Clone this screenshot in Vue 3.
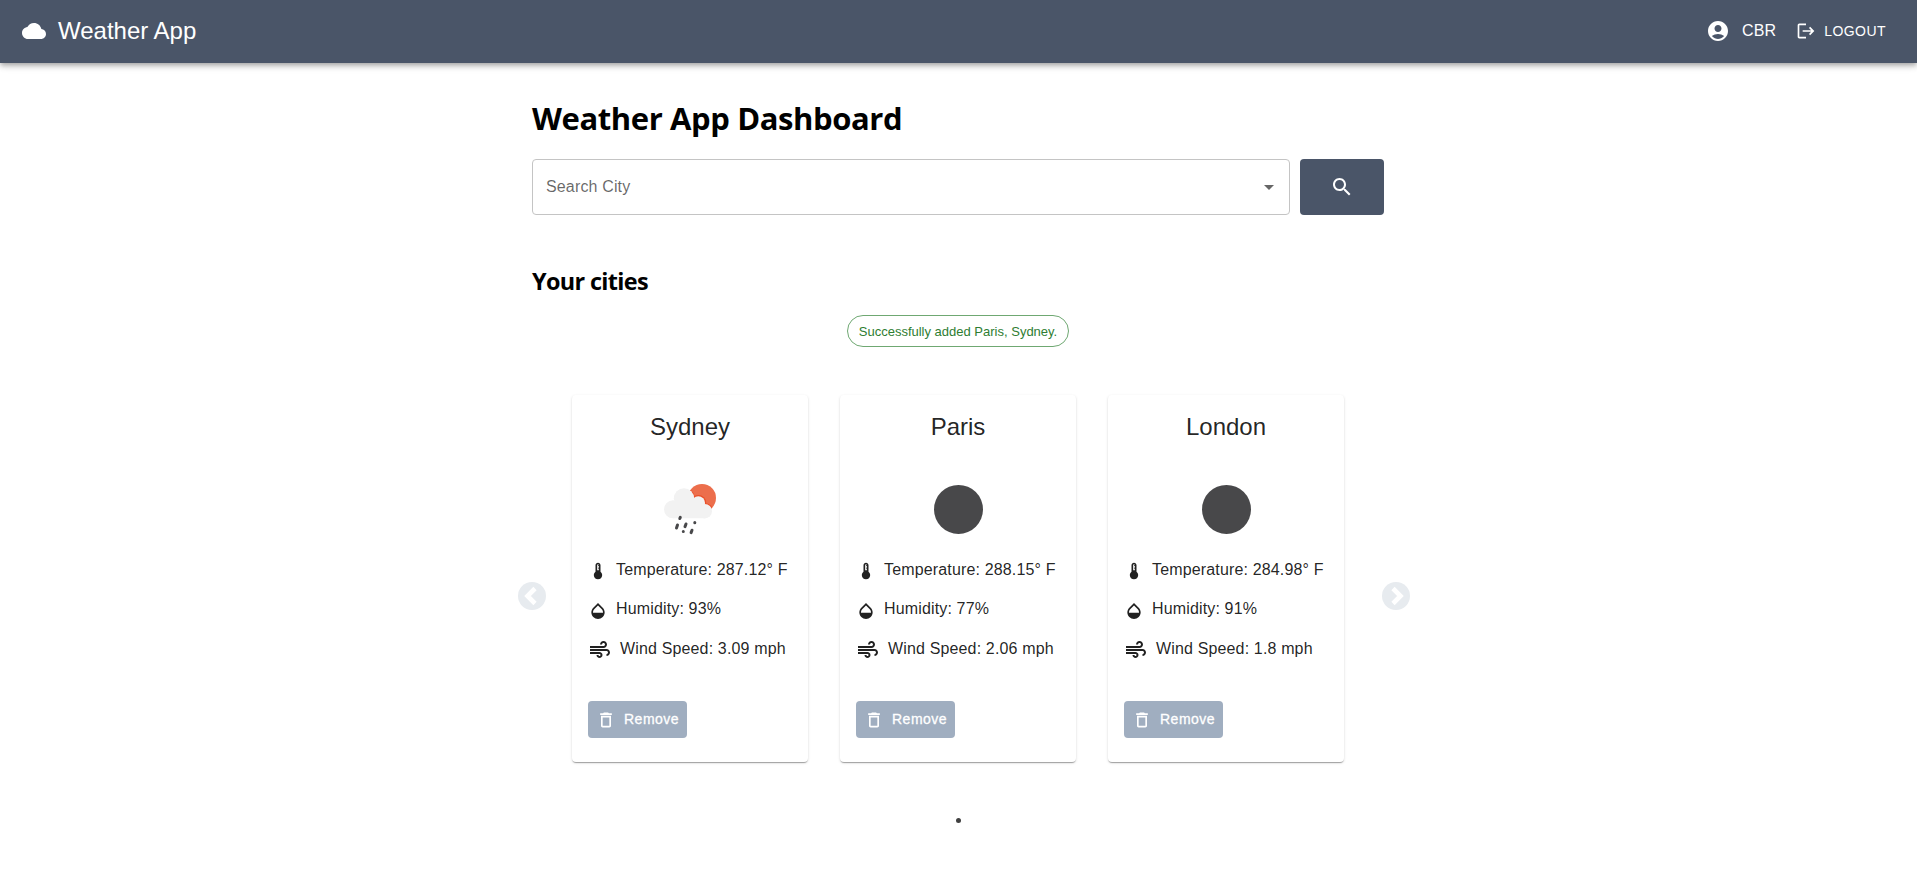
<script setup>
const cities = [
  { name: 'Sydney', sky: 'rain', temp: '287.12', humidity: 93, wind: '3.09' },
  { name: 'Paris', sky: 'cloud', temp: '288.15', humidity: 77, wind: '2.06' },
  { name: 'London', sky: 'cloud', temp: '284.98', humidity: 91, wind: '1.8' },
]
</script>

<template>
  <div class="page">
    <header class="bar">
      <svg class="i24" viewBox="0 0 24 24"><path d="M19.35 10.04C18.67 6.59 15.64 4 12 4 9.11 4 6.6 5.64 5.35 8.04 2.34 8.36 0 10.91 0 14c0 3.31 2.69 6 6 6h13c2.76 0 5-2.24 5-5 0-2.64-2.05-4.78-4.65-4.96z" /></svg>
      <span class="brand">Weather App</span>
      <svg class="i24" viewBox="0 0 24 24"><path d="M12 2C6.48 2 2 6.48 2 12s4.48 10 10 10 10-4.48 10-10S17.52 2 12 2zm0 4c1.93 0 3.5 1.57 3.5 3.5S13.93 13 12 13s-3.5-1.57-3.5-3.5S10.07 6 12 6zm0 14c-2.03 0-4.43-.82-6.14-2.88C7.55 15.8 9.68 15 12 15s4.45.8 6.14 2.12C16.43 19.18 14.03 20 12 20z" /></svg>
      <span class="user">CBR</span>
      <button class="logout">
        <svg class="i20" viewBox="0 0 24 24"><path d="m17 7-1.41 1.41L18.17 11H8v2h10.17l-2.58 2.58L17 17l5-5zM4 5h8V3H4c-1.1 0-2 .9-2 2v14c0 1.1.9 2 2 2h8v-2H4V5z" /></svg>
        <span>LOGOUT</span>
      </button>
    </header>

    <main class="main">
      <h1>Weather App Dashboard</h1>
      <div class="search">
        <div class="field">
          <span>Search City</span>
          <svg class="i24" viewBox="0 0 24 24"><path d="M7 10l5 5 5-5z" /></svg>
        </div>
        <button class="go">
          <svg class="i24" viewBox="0 0 24 24"><path d="M15.5 14h-.79l-.28-.27C15.41 12.59 16 11.11 16 9.5 16 5.91 13.09 3 9.5 3S3 5.91 3 9.5 5.91 16 9.5 16c1.61 0 3.09-.59 4.23-1.57l.27.28v.79l5 4.99L20.49 19l-4.99-5zm-6 0C7.01 14 5 11.99 5 9.5S7.01 5 9.5 5 14 7.01 14 9.5 11.99 14 9.5 14z" /></svg>
        </button>
      </div>
      <h2>Your cities</h2>
      <div class="notice"><span class="chip">Successfully added Paris, Sydney.</span></div>

      <section class="carousel">
        <svg class="arrow" viewBox="0 0 28 28"><circle cx="14" cy="14" r="14" /><path d="M17 6.5 9.5 14l7.5 7.5" /></svg>
        <div class="cards">
          <article v-for="c in cities" :key="c.name" class="card">
            <h3>{{ c.name }}</h3>
            <svg v-if="c.sky === 'rain'" class="sky" viewBox="0 0 100 100">
              <defs><clipPath id="sun"><circle cx="62" cy="39" r="14" /></clipPath></defs>
              <circle cx="62" cy="39" r="14" fill="#ec6e4c" />
              <g fill="#ea4f28" clip-path="url(#sun)">
                <circle cx="44" cy="39.5" r="10.8" />
                <circle cx="58.5" cy="43.7" r="7.7" />
                <circle cx="65" cy="52.4" r="8.2" />
              </g>
              <g fill="#f2f2f2">
                <circle cx="33" cy="50.3" r="9" />
                <circle cx="44" cy="39.5" r="10.2" />
                <circle cx="58.3" cy="44" r="6.8" />
                <circle cx="64.8" cy="52.2" r="7.2" />
                <path d="M33 43h25l7 8v8.3H33z" />
              </g>
              <g stroke="#48484a" stroke-width="3" stroke-linecap="round">
                <path d="M40.3 58.3l-.5 1.2M37.5 66l-1 3M46 65l-1 2.6M54.8 63.5v.2M43.3 72.4v.1M52 71.2l-.9 2.4" />
              </g>
            </svg>
            <svg v-else class="sky" viewBox="0 0 100 100"><circle cx="50.5" cy="50.4" r="24.5" fill="#48484a" /></svg>
            <p class="temp">
              <svg class="i20" viewBox="0 0 24 24"><path d="M15 13V5c0-1.66-1.34-3-3-3S9 3.34 9 5v8c-1.21.91-2 2.37-2 4 0 2.76 2.24 5 5 5s5-2.24 5-5c0-1.63-.79-3.09-2-4zm-4-8c0-.55.45-1 1-1s1 .45 1 1h-1v1h1v2h-1v1h1v2h-2V5z" /></svg>
              <span>Temperature: {{ c.temp }}° F</span>
            </p>
            <p class="humidity">
              <svg class="i20" viewBox="0 0 24 24"><path d="M17.66 8 12 2.35 6.34 8C4.78 9.56 4 11.64 4 13.64s.78 4.11 2.34 5.67 3.61 2.35 5.66 2.35 4.1-.79 5.66-2.35S20 15.64 20 13.64 19.22 9.56 17.66 8zM6 14c.01-2 .62-3.27 1.76-4.4L12 5.27l4.24 4.38C17.38 10.77 17.99 12 18 14H6z" /></svg>
              <span>Humidity: {{ c.humidity }}%</span>
            </p>
            <p class="wind">
              <svg class="i24" viewBox="0 0 24 24"><path d="M14.5 17c0 1.65-1.35 3-3 3s-3-1.35-3-3h2c0 .55.45 1 1 1s1-.45 1-1-.45-1-1-1H2v-2h9.5c1.65 0 3 1.35 3 3zM19 6.5C19 4.57 17.43 3 15.5 3S12 4.57 12 6.5h2c0-.83.67-1.5 1.5-1.5s1.5.67 1.5 1.5S16.33 8 15.5 8H2v2h13.5c1.93 0 3.5-1.57 3.5-3.5zm-.5 4.5H2v2h16.5c.83 0 1.5.67 1.5 1.5s-.67 1.5-1.5 1.5v2c1.93 0 3.5-1.57 3.5-3.5S20.43 11 18.5 11z" /></svg>
              <span>Wind Speed: {{ c.wind }} mph</span>
            </p>
            <button class="remove">
              <svg class="i20" viewBox="0 0 24 24"><path d="M6 19c0 1.1.9 2 2 2h8c1.1 0 2-.9 2-2V7H6v12zM8 9h8v10H8V9zm7.5-5-1-1h-5l-1 1H5v2h14V4z" /></svg>
              <span>Remove</span>
            </button>
          </article>
        </div>
        <svg class="arrow" viewBox="0 0 28 28"><circle cx="14" cy="14" r="14" /><path d="M11 6.5l7.5 7.5-7.5 7.5" /></svg>
      </section>
      <div class="dot"></div>
    </main>
  </div>
</template>

<style scoped>
.page {
  min-height: 880px;
  background: #fff;
  font-family: "Liberation Sans", Arial, sans-serif;
}
svg { display: block; flex: none; fill: currentColor; }
.i24 { width: 24px; height: 24px; }
.i20 { width: 20px; height: 20px; }
button { border: 0; padding: 0; font-family: inherit; color: #fff; background: none; }
h1, h2, h3, p { margin: 0; }

.bar {
  display: flex;
  align-items: center;
  height: 63px;
  padding: 0 31px 1px 22px;
  box-sizing: border-box;
  background: #4a5568;
  color: #fff;
  box-shadow: 0 2px 4px -1px rgba(0,0,0,.2), 0 4px 5px rgba(0,0,0,.14), 0 1px 10px rgba(0,0,0,.12);
}
.brand { flex: 1; margin-left: 12px; font-size: 24px; line-height: 32px; }
.user { margin: 0 20px 0 12px; font-size: 16px; line-height: 24px; letter-spacing: .15px; }
.logout { display: flex; align-items: center; gap: 8px; font-size: 14px; line-height: 24px; letter-spacing: .45px; }

.main { width: 852px; margin: 0 auto; padding-right: 1px; }
h1, h2 { font-family: "Open Sans", "Noto Sans", sans-serif; font-weight: 700; color: #000; white-space: nowrap; }
h1 { padding-top: 33px; font-size: 31px; line-height: 44px; letter-spacing: -.4px; }
.search { display: flex; gap: 10px; margin-top: 19px; }
.field {
  flex: 1;
  display: flex;
  align-items: center;
  justify-content: space-between;
  height: 56px;
  padding: 0 8px 0 13px;
  box-sizing: border-box;
  border: 1px solid #c4c4c4;
  border-radius: 4px;
  color: rgba(0,0,0,.6);
  font-size: 16px;
  letter-spacing: .15px;
}
.go { display: flex; align-items: center; justify-content: center; width: 84px; height: 56px; border-radius: 4px; background: #4a5568; }
h2 { margin-top: 50px; font-size: 23.4px; line-height: 33px; letter-spacing: -.65px; }
.notice { display: flex; justify-content: center; margin-top: 17px; }
.chip {
  height: 32px;
  padding: 0 11px;
  box-sizing: border-box;
  border: 1px solid #6fa872;
  border-radius: 16px;
  color: #2e7d32;
  font-size: 13px;
  line-height: 31px;
}

.carousel { display: flex; align-items: center; justify-content: space-between; margin: 48px -26px 0 -14px; }
.arrow { width: 28px; height: 28px; margin-top: 35px; color: #e7ebef; }
.arrow path { fill: none; stroke: #fff; stroke-width: 4.6; }
.cards { display: flex; gap: 32px; margin-right: 12px; }
.card {
  width: 236px;
  height: 367px;
  padding: 16px;
  box-sizing: border-box;
  border-radius: 4px;
  background: #fff;
  color: rgba(0,0,0,.87);
  box-shadow: 0 2px 1px -1px rgba(0,0,0,.2), 0 1px 1px rgba(0,0,0,.14), 0 1px 3px rgba(0,0,0,.12);
}
h3 { font-size: 24px; line-height: 32px; font-weight: 400; text-align: center; }
.sky { width: 100px; height: 100px; margin: 16px auto 0; }
.card p { display: flex; align-items: center; height: 24px; font-size: 16px; letter-spacing: .15px; white-space: nowrap; }
.card p span { margin-left: 8px; }
.temp span, .wind span { margin-bottom: 2px; }
.card .humidity { margin-top: 16px; }
.humidity span { margin-bottom: 4px; }
.card .wind { margin-top: 15px; }
.remove {
  display: flex;
  align-items: center;
  gap: 8px;
  height: 37px;
  margin-top: 39px;
  padding: 0 8px;
  border-radius: 4px;
  background: #a0aec0;
  font-size: 14px;
  letter-spacing: .5px;
  -webkit-text-stroke: .3px #fff;
}
.remove span { margin-bottom: 2px; }
.dot { width: 5px; height: 5px; margin: 56px auto 0; border-radius: 50%; background: #404040; }
</style>
<style>
body { margin: 0; background: #fff; }
</style>
